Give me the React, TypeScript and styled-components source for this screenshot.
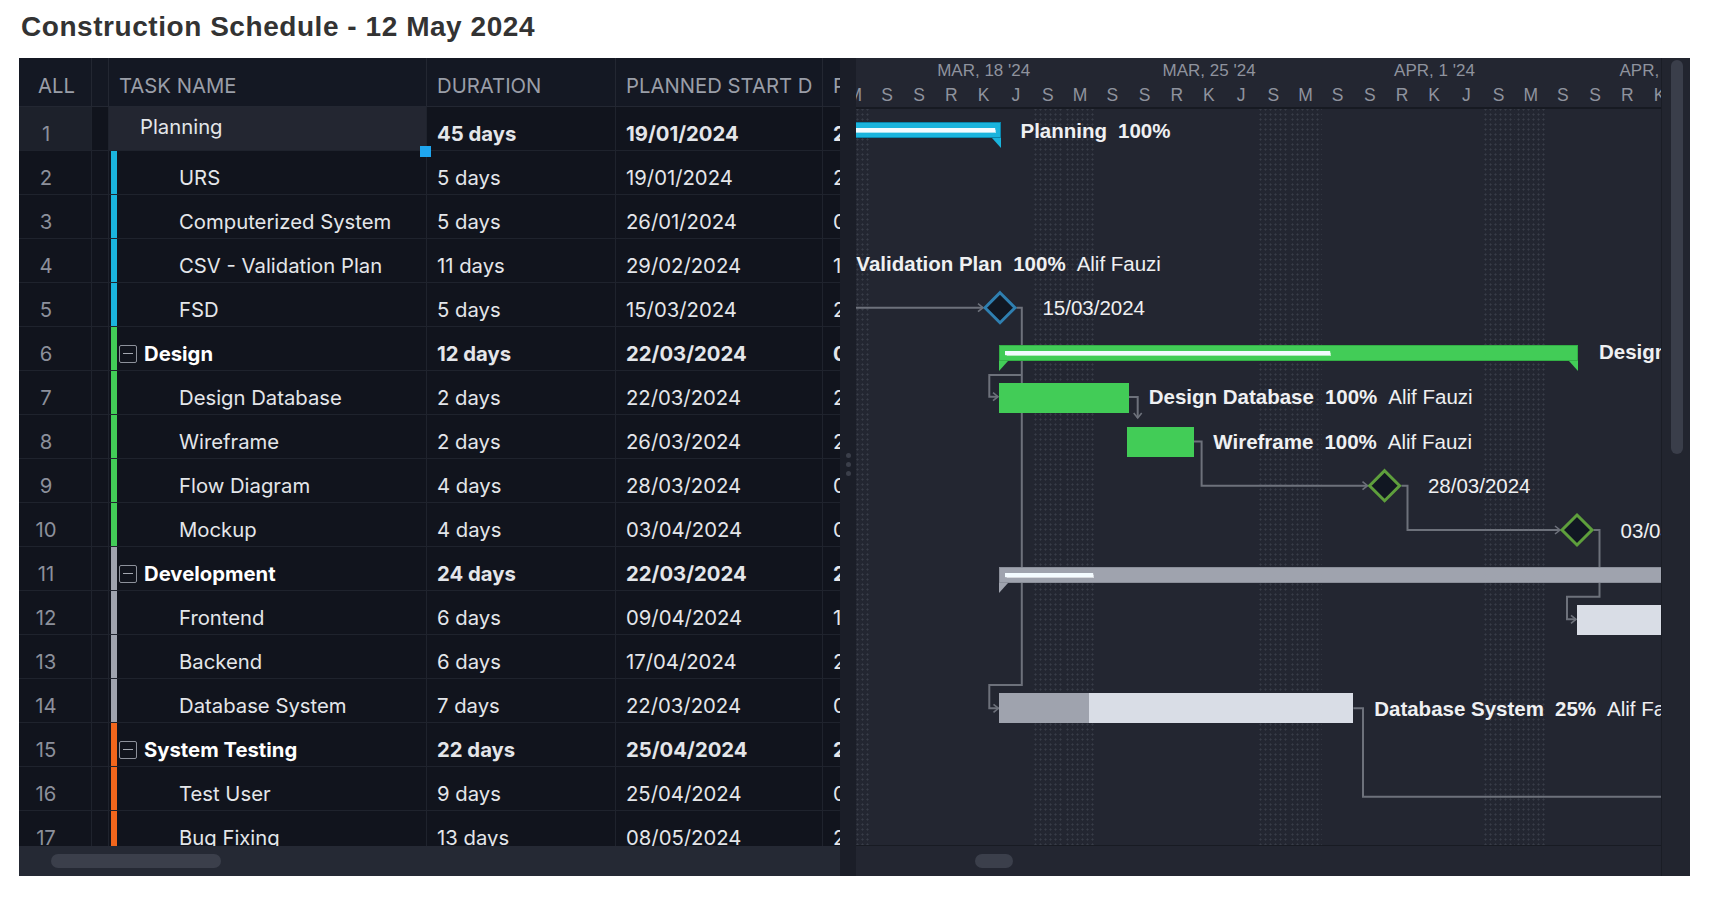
import React from 'react';
import styled, { createGlobalStyle, css } from 'styled-components';

const GlobalStyle = createGlobalStyle`
  html, body { margin: 0; padding: 0; background: #ffffff; }
  body { font-family: Inter, "Liberation Sans", Arial, sans-serif; }
  * { box-sizing: border-box; }
`;

/* ---------- data ---------- */
type Row = {
  n: number;
  name: string;
  dur: string;
  start: string;
  finish: string;
  group?: boolean;
  editing?: boolean;
  strip?: string;
};

const CYAN = '#1ab4dd';
const GREEN = '#42cc57';
const GRAY = '#9fa3ae';
const ORANGE = '#f2661c';

const ROWS: Row[] = [
  { n: 1, name: 'Planning', dur: '45 days', start: '19/01/2024', finish: '21/03/2024', group: true, editing: true },
  { n: 2, name: 'URS', dur: '5 days', start: '19/01/2024', finish: '25/01/2024', strip: CYAN },
  { n: 3, name: 'Computerized System', dur: '5 days', start: '26/01/2024', finish: '01/02/2024', strip: CYAN },
  { n: 4, name: 'CSV - Validation Plan', dur: '11 days', start: '29/02/2024', finish: '14/03/2024', strip: CYAN },
  { n: 5, name: 'FSD', dur: '5 days', start: '15/03/2024', finish: '21/03/2024', strip: CYAN },
  { n: 6, name: 'Design', dur: '12 days', start: '22/03/2024', finish: '08/04/2024', group: true, strip: GREEN },
  { n: 7, name: 'Design Database', dur: '2 days', start: '22/03/2024', finish: '25/03/2024', strip: GREEN },
  { n: 8, name: 'Wireframe', dur: '2 days', start: '26/03/2024', finish: '27/03/2024', strip: GREEN },
  { n: 9, name: 'Flow Diagram', dur: '4 days', start: '28/03/2024', finish: '02/04/2024', strip: GREEN },
  { n: 10, name: 'Mockup', dur: '4 days', start: '03/04/2024', finish: '08/04/2024', strip: GREEN },
  { n: 11, name: 'Development', dur: '24 days', start: '22/03/2024', finish: '24/04/2024', group: true, strip: GRAY },
  { n: 12, name: 'Frontend', dur: '6 days', start: '09/04/2024', finish: '16/04/2024', strip: GRAY },
  { n: 13, name: 'Backend', dur: '6 days', start: '17/04/2024', finish: '24/04/2024', strip: GRAY },
  { n: 14, name: 'Database System', dur: '7 days', start: '22/03/2024', finish: '01/04/2024', strip: GRAY },
  { n: 15, name: 'System Testing', dur: '22 days', start: '25/04/2024', finish: '24/05/2024', group: true, strip: ORANGE },
  { n: 16, name: 'Test User', dur: '9 days', start: '25/04/2024', finish: '07/05/2024', strip: ORANGE },
  { n: 17, name: 'Bug Fixing', dur: '13 days', start: '08/05/2024', finish: '24/05/2024', strip: ORANGE },
];

const DAY = 32.2;
const ORIGIN = 15; // local x of Mon 18 Mar
const GRID_START = ORIGIN - 7 * DAY; // Mon 11 Mar
const WEEKS = ["MAR, 11 '24", "MAR, 18 '24", "MAR, 25 '24", "APR, 1 '24", "APR, 8 '24"];
const LETTERS = ['S', 'S', 'R', 'K', 'J', 'S', 'M'];
const DAYS = Array.from({ length: 35 }, (_, i) => ({ letter: LETTERS[i % 7], weekend: i % 7 >= 5 }));

type Part = { text: string; bold?: boolean };
type LabelDef = { x: number; y: number; parts: Part[] };

const LABELS: LabelDef[] = [
  { x: 164.5, y: 22, parts: [{ text: 'Planning', bold: true }, { text: '100%', bold: true }] },
  { x: -60, y: 155, parts: [{ text: 'CSV - Validation Plan', bold: true }, { text: '100%', bold: true }, { text: 'Alif Fauzi' }] },
  { x: 186.4, y: 199, parts: [{ text: '15/03/2024' }] },
  { x: 743, y: 242.5, parts: [{ text: 'Design', bold: true }, { text: '56%', bold: true }] },
  { x: 292.7, y: 287.5, parts: [{ text: 'Design Database', bold: true }, { text: '100%', bold: true }, { text: 'Alif Fauzi' }] },
  { x: 357.3, y: 332.5, parts: [{ text: 'Wireframe', bold: true }, { text: '100%', bold: true }, { text: 'Alif Fauzi' }] },
  { x: 571.9, y: 377, parts: [{ text: '28/03/2024' }] },
  { x: 764.6, y: 421.5, parts: [{ text: '03/04/2024' }] },
  { x: 518.2, y: 599.5, parts: [{ text: 'Database System', bold: true }, { text: '25%', bold: true }, { text: 'Alif Fauzi' }] },
];

type Summary = { x: number; w: number; y: number; color: string; edge: string; line: number };
const SUMMARIES: Summary[] = [
  { x: -120, w: 264.7, y: 12.7, color: CYAN, edge: '#0b85ab', line: 253 },
  { x: 142.8, w: 579.2, y: 236, color: GREEN, edge: '#33b046', line: 325 },
  { x: 143.4, w: 720, y: 457.7, color: GRAY, edge: '#8b8f9a', line: 88 },
];

type Task = { x: number; w: number; y: number; color: string; done?: number };
const TASKS: Task[] = [
  { x: 142.8, w: 130.2, y: 273.7, color: GREEN },
  { x: 271, w: 67, y: 317.7, color: GREEN },
  { x: 721, w: 200, y: 496, color: '#d9dde6' },
  { x: 143.4, w: 354, y: 584.3, color: '#d9dde6', done: 89.5 },
];

type Diamond = { x: number; y: number; stroke: string };
const DIAMONDS: Diamond[] = [
  { x: 144, y: 198.7, stroke: '#2f7fb0' },
  { x: 528.6, y: 376.7, stroke: '#5e9f3c' },
  { x: 721, y: 421, stroke: '#5e9f3c' },
];

const LINES: string[] = [
  'M0,198.7 H127',
  'M160.5,198.7 H165.8 V576 H133.3 V599.3 H142.5',
  'M165.8,266 H133.3 V287.7 H142',
  'M273,288 H281.7 V309',
  'M338,332.5 H345.6 V376.7 H511.5',
  'M545.5,376.7 H551.5 V421 H704',
  'M737.5,421 H743.5 V487.7 H711 V510.3 H720',
  'M497.4,599.3 H507 V687.7 H805',
];

const ARROWS: string[] = [
  'M122,194.7 L127,198.7 L122,202.7',
  'M137.5,595.3 L142.5,599.3 L137.5,603.3',
  'M137,283.7 L142,287.7 L137,291.7',
  'M277.7,304 L281.7,309 L285.7,304',
  'M506.5,372.7 L511.5,376.7 L506.5,380.7',
  'M699,417 L704,421 L699,425',
  'M715,506.3 L720,510.3 L715,514.3',
];

/* ---------- layout ---------- */
const Page = styled.div`
  width: 1717px;
  height: 904px;
  overflow: hidden;
  background: #ffffff;
`;

const Title = styled.h1`
  margin: 0;
  height: 58px;
  padding: 10px 0 0 21px;
  font-family: "Liberation Sans", Arial, sans-serif;
  font-size: 28px;
  line-height: 34px;
  font-weight: 700;
  letter-spacing: 0.55px;
  color: #333333;
`;

const Board = styled.div`
  margin-left: 19px;
  width: 1671px;
  height: 818px;
  display: flex;
  background: #11141d;
`;

/* ---------- table ---------- */
const COLS = '73px 17px 318px 189px 207px 190px';

const TablePane = styled.div`
  width: 821px;
  flex: none;
  display: flex;
  flex-direction: column;
  overflow: hidden;
  background: #11141d;
`;

const TableHead = styled.div`
  flex: none;
  display: grid;
  grid-template-columns: ${COLS};
  height: 49px;
  background: #141823;
  border-bottom: 1px solid #232732;
`;

const HeadCell = styled.div<{ $pad: number }>`
  display: flex;
  align-items: center;
  padding: 7px 10px 0 ${p => p.$pad}px;
  border-right: 1px solid #232732;
  font-size: 20.3px;
  color: #9a9ea8;
  white-space: nowrap;
  overflow: hidden;
`;

const HeadText = styled.span`
  display: block;
  overflow: hidden;
`;

const TableBody = styled.div`
  flex: none;
  height: 739px;
  overflow: hidden;
  display: flex;
  flex-direction: column;
`;

const TRow = styled.div`
  flex: none;
  display: grid;
  grid-template-columns: ${COLS};
  height: 44px;
  border-bottom: 1px solid #1f232d;
`;

const Cell = styled.div<{ $bold?: boolean; $pad?: number }>`
  display: flex;
  align-items: center;
  padding: 10px 0 0 ${p => p.$pad ?? 10}px;
  border-right: 1px solid #1f232d;
  font-size: 20.3px;
  color: #e4e6ea;
  font-weight: ${p => (p.$bold ? 700 : 400)};
  white-space: nowrap;
  overflow: hidden;
`;

const NumCell = styled(Cell)<{ $active?: boolean }>`
  justify-content: center;
  padding-right: 18px;
  color: #8c909b;
  background: ${p => (p.$active ? '#1d212b' : 'transparent')};
`;

const NameCell = styled.div<{ $editing?: boolean }>`
  position: relative;
  display: flex;
  align-items: stretch;
  border-right: 1px solid #1f232d;
  background: ${p => (p.$editing ? '#232631' : 'transparent')};
  overflow: ${p => (p.$editing ? 'visible' : 'hidden')};
`;

const Strip = styled.div<{ $color: string }>`
  flex: none;
  width: 6px;
  margin-left: 2px;
  background: ${p => p.$color};
`;

const NameContent = styled.div<{ $indent: number; $editing?: boolean; $bold?: boolean }>`
  display: flex;
  align-items: center;
  gap: 7px;
  padding-left: ${p => p.$indent}px;
  font-size: 20.3px;
  white-space: nowrap;
  color: ${p => (p.$bold ? '#ffffff' : '#e4e6ea')};
  font-weight: ${p => (p.$bold ? 700 : 400)};
  ${p =>
    p.$editing
      ? css`
          padding-bottom: 5px;
        `
      : css`
          padding-top: 10px;
        `}
`;

const MinusBox = styled.span`
  flex: none;
  width: 18px;
  height: 18px;
  border: 1.5px solid #8d919b;
  border-radius: 2px;
  display: flex;
  align-items: center;
  justify-content: center;
  &::after {
    content: '';
    width: 10px;
    height: 1.6px;
    background: #a3a7b0;
  }
`;

const FillHandle = styled.span`
  position: absolute;
  right: -5px;
  bottom: -7px;
  width: 11px;
  height: 11px;
  background: #1fa6ef;
  z-index: 3;
`;

const HScroll = styled.div<{ $pad: number }>`
  flex: none;
  height: 30px;
  display: flex;
  align-items: center;
  padding-left: ${p => p.$pad}px;
  background: #252934;
`;

const HThumb = styled.div<{ $w: number }>`
  width: ${p => p.$w}px;
  height: 14px;
  border-radius: 7px;
  background: #3b3f4b;
`;

/* ---------- splitter ---------- */
const Splitter = styled.div`
  width: 16px;
  flex: none;
  display: flex;
  flex-direction: column;
  align-items: center;
  justify-content: center;
  gap: 4px;
  padding-bottom: 6px;
  background: #1b1e28;
`;

const GripDot = styled.span`
  width: 5px;
  height: 5px;
  border-radius: 50%;
  background: #3b3f4a;
`;

/* ---------- gantt ---------- */
const GanttPane = styled.div`
  width: 805px;
  flex: none;
  display: flex;
  flex-direction: column;
  overflow: hidden;
  background: #232631;
`;

const GanttHeader = styled.div`
  flex: none;
  height: 51px;
  display: flex;
  flex-direction: column;
  overflow: hidden;
  border-bottom: 2px solid #171a22;
  font-family: "Liberation Sans", Arial, sans-serif;
  color: #8f939e;
`;

const Track = styled.div<{ $h: number }>`
  flex: none;
  display: flex;
  height: ${p => p.$h}px;
  margin-left: ${GRID_START}px;
`;

const WeekCell = styled.div`
  flex: none;
  width: ${7 * DAY}px;
  text-align: center;
  font-size: 17px;
  line-height: 26px;
  white-space: nowrap;
`;

const DayCell = styled.div`
  flex: none;
  width: ${DAY}px;
  text-align: center;
  font-size: 17.5px;
  line-height: 24px;
`;

const GanttBody = styled.div`
  flex: none;
  height: 736px;
  position: relative;
  overflow: hidden;
`;

const DayGrid = styled.div`
  display: flex;
  height: 100%;
  margin-left: ${GRID_START}px;
`;

const DayColumn = styled.div<{ $weekend: boolean }>`
  flex: none;
  width: ${DAY}px;
  height: 100%;
  ${p =>
    p.$weekend &&
    css`
      background-image: radial-gradient(circle at center, #383c48 0 0.85px, transparent 1.25px);
      background-size: 5px 5px;
      background-position: 1px 3px;
    `}
`;

const Connectors = styled.svg`
  position: absolute;
  left: 0;
  top: 0;
  width: 805px;
  height: 736px;
`;

const SummaryBar = styled.div<{ $color: string; $edge: string }>`
  position: absolute;
  height: 16px;
  background: ${p => p.$color};
  box-shadow: inset 0 0 0 1px ${p => p.$edge};
  &::before,
  &::after {
    content: '';
    position: absolute;
    top: 100%;
    width: 0;
    height: 0;
    border-top: 10px solid ${p => p.$color};
  }
  &::before {
    left: 0;
    border-right: 9px solid transparent;
  }
  &::after {
    right: 0;
    border-left: 9px solid transparent;
  }
`;

const ProgressLine = styled.div`
  position: absolute;
  left: 6px;
  top: 6px;
  height: 4px;
  background: #f3fbff;
  box-shadow: 0 0 1px 0.5px rgba(255, 255, 255, 0.6);
`;

const TaskBar = styled.div<{ $color: string }>`
  position: absolute;
  height: 30px;
  background: ${p => p.$color};
  display: flex;
`;

const DonePart = styled.div`
  height: 100%;
  background: #9fa3ae;
`;

const Label = styled.div`
  position: absolute;
  display: flex;
  gap: 11px;
  transform: translateY(-50%);
  font-family: "Liberation Sans", Arial, sans-serif;
  font-size: 20.5px;
  line-height: 24px;
  color: #eff0f2;
  white-space: nowrap;
`;

const LabelPart = styled.span<{ $bold?: boolean }>`
  font-weight: ${p => (p.$bold ? 700 : 400)};
`;

const GanttScroll = styled(HScroll)`
  height: 31px;
  background: #232631;
  border-top: 1px solid #181b23;
`;

/* ---------- vertical scroll ---------- */
const VScroll = styled.div`
  width: 29px;
  flex: none;
  padding: 2px 0 0 9px;
  background: #22252f;
  border-left: 1px solid #1a1d25;
`;

const VThumb = styled.div`
  width: 12px;
  height: 394px;
  border-radius: 6px;
  background: #3a3e4a;
`;

/* ---------- components ---------- */
function TableRow({ r }: { r: Row }) {
  const bold = !!r.group;
  const indent = r.editing ? 31 : r.group ? 2 : 62;
  return (
    <TRow>
      <NumCell $pad={0} $active={r.editing}>{r.n}</NumCell>
      <Cell $pad={0} />
      <NameCell $editing={r.editing}>
        {r.strip && <Strip $color={r.strip} />}
        <NameContent $indent={indent} $editing={r.editing} $bold={bold && !r.editing}>
          {r.group && !r.editing && <MinusBox />}
          <span>{r.name}</span>
        </NameContent>
        {r.editing && <FillHandle />}
      </NameCell>
      <Cell $bold={bold}>{r.dur}</Cell>
      <Cell $bold={bold}>{r.start}</Cell>
      <Cell $bold={bold}>{r.finish}</Cell>
    </TRow>
  );
}

export default function App() {
  return (
    <>
      <GlobalStyle />
      <Page>
        <Title>Construction Schedule - 12 May 2024</Title>
        <Board>
          <TablePane>
            <TableHead>
              <HeadCell $pad={19}>ALL</HeadCell>
              <HeadCell $pad={0} />
              <HeadCell $pad={10}><HeadText>TASK NAME</HeadText></HeadCell>
              <HeadCell $pad={10}><HeadText>DURATION</HeadText></HeadCell>
              <HeadCell $pad={10}><HeadText>PLANNED START DATE</HeadText></HeadCell>
              <HeadCell $pad={10}><HeadText>PLANNED FINISH DATE</HeadText></HeadCell>
            </TableHead>
            <TableBody>
              {ROWS.map(r => (
                <TableRow key={r.n} r={r} />
              ))}
            </TableBody>
            <HScroll $pad={32}>
              <HThumb $w={170} />
            </HScroll>
          </TablePane>

          <Splitter>
            <GripDot />
            <GripDot />
            <GripDot />
          </Splitter>

          <GanttPane>
            <GanttHeader>
              <Track $h={25}>
                {WEEKS.map(w => (
                  <WeekCell key={w}>{w}</WeekCell>
                ))}
              </Track>
              <Track $h={24}>
                {DAYS.map((d, i) => (
                  <DayCell key={i}>{d.letter}</DayCell>
                ))}
              </Track>
            </GanttHeader>
            <GanttBody>
              <DayGrid>
                {DAYS.map((d, i) => (
                  <DayColumn key={i} $weekend={d.weekend} />
                ))}
              </DayGrid>
              <Connectors viewBox="0 0 805 736">
                <g fill="none" stroke="#6d717b" strokeWidth={2}>
                  {LINES.map((d, i) => (
                    <path key={i} d={d} />
                  ))}
                  {ARROWS.map((d, i) => (
                    <path key={'a' + i} d={d} strokeWidth={1.6} />
                  ))}
                </g>
                {DIAMONDS.map((m, i) => (
                  <polygon
                    key={i}
                    points={`${m.x},${m.y - 15} ${m.x + 15},${m.y} ${m.x},${m.y + 15} ${m.x - 15},${m.y}`}
                    fill="#111722"
                    stroke={m.stroke}
                    strokeWidth={3}
                  />
                ))}
              </Connectors>
              {SUMMARIES.map((s, i) => (
                <SummaryBar key={i} $color={s.color} $edge={s.edge} style={{ left: s.x, top: s.y, width: s.w }}>
                  <ProgressLine style={{ width: s.line }} />
                </SummaryBar>
              ))}
              {TASKS.map((t, i) => (
                <TaskBar key={i} $color={t.color} style={{ left: t.x, top: t.y, width: t.w }}>
                  {t.done ? <DonePart style={{ width: t.done }} /> : null}
                </TaskBar>
              ))}
              {LABELS.map((l, i) => (
                <Label key={i} style={{ left: l.x, top: l.y }}>
                  {l.parts.map((p, j) => (
                    <LabelPart key={j} $bold={p.bold}>
                      {p.text}
                    </LabelPart>
                  ))}
                </Label>
              ))}
            </GanttBody>
            <GanttScroll $pad={119}>
              <HThumb $w={38} />
            </GanttScroll>
          </GanttPane>

          <VScroll>
            <VThumb />
          </VScroll>
        </Board>
      </Page>
    </>
  );
}
